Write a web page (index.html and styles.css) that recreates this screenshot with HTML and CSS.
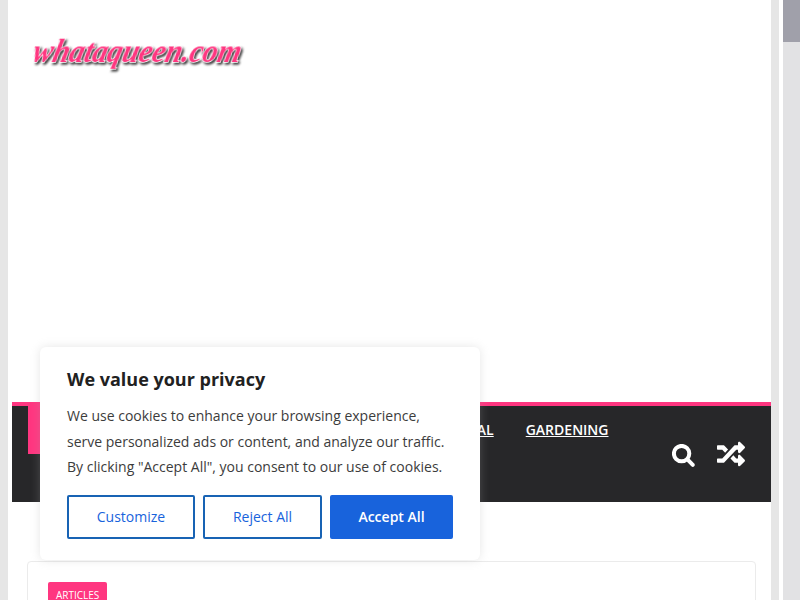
FILE: index.html
```
<!DOCTYPE html>
<html lang="en">
  <head>
    <meta charset="UTF-8" />
    <meta name="viewport" content="width=device-width, initial-scale=1.0" />
    <title>whataqueen.com</title>
    <link rel="stylesheet" href="styles.css">
  </head>
  <body>
    <div class="page">
      <div class="site">
        <header class="site-header">
          <a href="#" class="logo">
            <svg width="230" height="60" viewBox="0 0 230 60">
              <text class="logo-text" transform="translate(5 40) skewX(-14)" textLength="208" lengthAdjust="spacingAndGlyphs">whataqueen.com</text>
            </svg>
          </a>
        </header>

        <nav class="main-nav">
          <a href="#" class="nav-home"></a>
          <ul class="nav-menu">
            <li><a href="#">GENERAL</a></li>
            <li><a href="#">GARDENING</a></li>
          </ul>
          <div class="nav-icons">
            <svg class="icon-search" viewBox="0 0 24 24">
              <circle cx="9.6" cy="9.6" r="7.7" />
              <path d="M15.4 15.4l5.4 5.4" />
            </svg>
            <svg class="icon-random" viewBox="0 0 512 512">
              <path d="M504.971 359.029c9.373 9.373 9.373 24.569 0 33.941l-80 79.984c-15.01 15.01-40.971 4.49-40.971-16.971V416h-58.785a12.004 12.004 0 0 1-8.773-3.812l-70.556-75.596 53.333-57.143L352 336h32v-39.981c0-21.438 25.943-31.998 40.971-16.971l80 79.981zM12 176h84l52.781 56.551 53.333-57.143-70.556-75.596A11.999 11.999 0 0 0 122.785 96H12c-6.627 0-12 5.373-12 12v56c0 6.627 5.373 12 12 12zm372 0v39.984c0 21.46 25.961 31.98 40.971 16.971l80-79.984c9.373-9.373 9.373-24.569 0-33.941l-80-79.981C409.943 24.021 384 34.582 384 56.019V96h-58.785a12.004 12.004 0 0 0-8.773 3.812L96 336H12c-6.627 0-12 5.373-12 12v56c0 6.627 5.373 12 12 12h110.785c3.326 0 6.503-1.381 8.773-3.812L352 176h32z" />
            </svg>
          </div>
        </nav>

        <article class="post">
          <a href="#" class="post-category">ARTICLES</a>
        </article>
      </div>
    </div>

    <div class="scrollbar">
      <div class="scrollbar-thumb"></div>
    </div>

    <div class="cookie-box">
      <h2 class="cookie-title">We value your privacy</h2>
      <p class="cookie-text">
        We use cookies to enhance your browsing experience,<br />
        serve personalized ads or content, and analyze our traffic.<br />
        By clicking "Accept All", you consent to our use of cookies.
      </p>
      <div class="cookie-buttons">
        <button class="btn btn-customize">Customize</button>
        <button class="btn btn-reject">Reject All</button>
        <button class="btn btn-accept">Accept All</button>
      </div>
    </div>
  </body>
</html>
```
FILE: styles.css
```
* {
  margin: 0;
  padding: 0;
  box-sizing: border-box;
}

body {
  font-family: "Open Sans", "Noto Sans", sans-serif;
  background-color: #fff;
  height: 600px;
  display: flex;
  overflow: hidden;
}

.page {
  width: 779px;
  height: 600px;
  padding: 0 8px;
  background-color: #e6e6e6;
  overflow: hidden;
}

.site {
  height: 600px;
  padding-left: 4px;
  background-color: #fff;
}

.site-header {
  height: 402px;
  padding: 22px 0 0 14px;
}

.logo {
  display: inline-block;
}

.logo svg {
  display: block;
  overflow: visible;
}

.logo-text {
  font-family: "Liberation Serif", serif;
  font-size: 33px;
  font-style: italic;
  font-weight: bold;
  fill: #ff3680;
  stroke: #fff;
  stroke-width: 1.5px;
  paint-order: stroke;
  filter: drop-shadow(2px 2px 1px #444);
}

.main-nav {
  height: 100px;
  display: flex;
  padding-left: 16px;
  background-color: #272729;
  border-top: 4px solid #ff3680;
}

.nav-home {
  width: 45px;
  height: 48px;
  background-color: #ff3680;
}

.nav-menu {
  flex: 1;
  display: flex;
  justify-content: flex-end;
  gap: 32px;
  list-style: none;
  padding: 12px 63.5px 0 0;
}

.nav-menu a {
  color: #fff;
  font-size: 14px;
  font-weight: 600;
  line-height: 20px;
}

.nav-icons {
  display: flex;
  gap: 21px;
  padding: 34px 26px 0 0;
}

.icon-search {
  width: 24px;
  height: 24px;
  margin-top: 4px;
  fill: none;
  stroke: #fff;
  stroke-width: 4;
  stroke-linecap: round;
}

.icon-random {
  width: 28px;
  height: 28px;
  fill: #fff;
}

.post {
  width: 729px;
  height: 200px;
  margin: 59px 0 0 15px;
  padding: 20px;
  background-color: #fff;
  border: 1px solid #ebebeb;
  border-radius: 4px;
}

.post-category {
  display: inline-block;
  padding: 4px 8px;
  background-color: #ff3680;
  border-radius: 2px;
  color: #fff;
  font-size: 10px;
  line-height: 18px;
  text-decoration: none;
}

.scrollbar {
  width: 17px;
  height: 600px;
  margin-left: 4px;
  background-color: #e2e2e4;
}

.scrollbar-thumb {
  height: 42px;
  background-color: #a0a0aa;
}

/* cookie consent popup */
.cookie-box {
  position: absolute;
  left: 40px;
  bottom: 40px;
  width: 440px;
  height: 213px;
  padding: 19px 27px 20px;
  background-color: #fff;
  border-radius: 6px;
  box-shadow: 0 0 10px rgba(172, 171, 171, 0.3);
}

.cookie-title {
  color: #212121;
  font-size: 18px;
  font-weight: 700;
  line-height: 26px;
  margin-bottom: 11px;
}

.cookie-text {
  color: #3c3c3c;
  font-size: 14px;
  line-height: 25.5px;
  white-space: nowrap;
}

.cookie-buttons {
  display: flex;
  gap: 8px;
  margin-top: 15px;
}

.btn {
  height: 44px;
  border: 2px solid #1863b4;
  border-radius: 2px;
  background-color: #fff;
  color: #1863dc;
  font-family: inherit;
  font-size: 14px;
  cursor: pointer;
}

.btn-customize {
  width: 128px;
}

.btn-reject {
  width: 119px;
}

.btn-accept {
  width: 123px;
  background-color: #1863dc;
  border-color: #1863dc;
  color: #fff;
  font-weight: 600;
}
```
